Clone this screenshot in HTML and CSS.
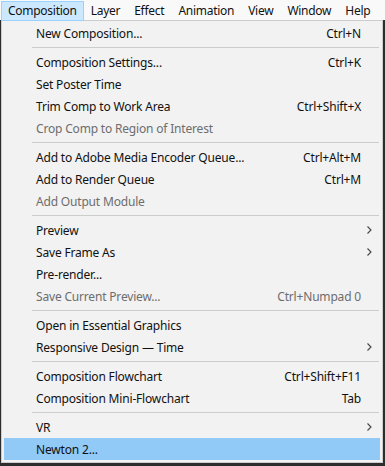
FILE: index.html
```html
<!DOCTYPE html>
<html>
<head>
<meta charset="utf-8">
<link rel="stylesheet" href="styles.css">
</head>
<body>
<div class="menubar">
  <div class="mb-item active">Composition</div>
  <div class="mb-item">Layer</div>
  <div class="mb-item">Effect</div>
  <div class="mb-item">Animation</div>
  <div class="mb-item">View</div>
  <div class="mb-item">Window</div>
  <div class="mb-item">Help</div>
</div>
<div class="dropdown">
  <div class="item"><span class="label">New Composition...</span><span class="key">Ctrl+N</span><span class="sub"></span></div>
  <div class="sep"></div>
  <div class="item"><span class="label">Composition Settings...</span><span class="key">Ctrl+K</span><span class="sub"></span></div>
  <div class="item"><span class="label">Set Poster Time</span><span class="key"></span><span class="sub"></span></div>
  <div class="item"><span class="label">Trim Comp to Work Area</span><span class="key">Ctrl+Shift+X</span><span class="sub"></span></div>
  <div class="item disabled"><span class="label">Crop Comp to Region of Interest</span><span class="key"></span><span class="sub"></span></div>
  <div class="sep"></div>
  <div class="item"><span class="label">Add to Adobe Media Encoder Queue...</span><span class="key">Ctrl+Alt+M</span><span class="sub"></span></div>
  <div class="item"><span class="label">Add to Render Queue</span><span class="key">Ctrl+M</span><span class="sub"></span></div>
  <div class="item disabled"><span class="label">Add Output Module</span><span class="key"></span><span class="sub"></span></div>
  <div class="sep"></div>
  <div class="item"><span class="label">Preview</span><span class="key"></span><span class="sub"><svg class="arrow" width="5" height="8" viewBox="0 0 5 8"><polyline points="0.5,0.5 4,4 0.5,7.5"/></svg></span></div>
  <div class="item"><span class="label">Save Frame As</span><span class="key"></span><span class="sub"><svg class="arrow" width="5" height="8" viewBox="0 0 5 8"><polyline points="0.5,0.5 4,4 0.5,7.5"/></svg></span></div>
  <div class="item"><span class="label">Pre-render...</span><span class="key"></span><span class="sub"></span></div>
  <div class="item disabled"><span class="label">Save Current Preview...</span><span class="key">Ctrl+Numpad 0</span><span class="sub"></span></div>
  <div class="sep"></div>
  <div class="item"><span class="label">Open in Essential Graphics</span><span class="key"></span><span class="sub"></span></div>
  <div class="item"><span class="label">Responsive Design — Time</span><span class="key"></span><span class="sub"><svg class="arrow" width="5" height="8" viewBox="0 0 5 8"><polyline points="0.5,0.5 4,4 0.5,7.5"/></svg></span></div>
  <div class="sep"></div>
  <div class="item"><span class="label">Composition Flowchart</span><span class="key">Ctrl+Shift+F11</span><span class="sub"></span></div>
  <div class="item"><span class="label">Composition Mini-Flowchart</span><span class="key">Tab</span><span class="sub"></span></div>
  <div class="sep"></div>
  <div class="item"><span class="label">VR</span><span class="key"></span><span class="sub"><svg class="arrow" width="5" height="8" viewBox="0 0 5 8"><polyline points="0.5,0.5 4,4 0.5,7.5"/></svg></span></div>
  <div class="item hover"><span class="label">Newton 2...</span><span class="key"></span><span class="sub"></span></div>
</div>
</body>
</html>
```
FILE: styles.css
```css
html, body {
  margin: 0;
  padding: 0;
}
body {
  background: #2d2d2d;
  width: 385px;
  height: 466px;
  overflow: hidden;
  font-family: "Noto Sans", "Liberation Sans", sans-serif;
  font-size: 12px;
  color: #111;
}
.menubar {
  height: 20px;
  background: #f9f9f9;
  display: flex;
  align-items: flex-start;
  padding-left: 1px;
  letter-spacing: -0.27px;
}
.mb-item {
  height: 18px;
  line-height: 18px;
  padding: 0 6px;
  margin-top: 1px;
  border: 1px solid transparent;
}
.mb-item.active {
  background: #cce8ff;
  border-color: #99d1ff;
}
.dropdown {
  margin-left: 1px;
  width: 376px;
  border: 1px solid #cccccc;
  padding: 1px 2px 2px 2px;
  background: #f2f2f2;
  letter-spacing: -0.18px;
}
.item {
  height: 22px;
  display: flex;
  align-items: center;
}
.item .label {
  padding-left: 32px;
  flex: 1;
  white-space: nowrap;
}
.item .key {
  white-space: nowrap;
}
.item .sub {
  width: 19px;
  display: flex;
  align-items: center;
}
.arrow {
  margin-left: 6px;
  fill: none;
  stroke: #444;
  stroke-width: 1.1;
}
.item.disabled {
  color: #6d6d6d;
}
.item.hover {
  background: #91c9f7;
}
.sep {
  height: 7px;
  display: flex;
  align-items: center;
  padding-left: 28px;
  padding-right: 1px;
}
.sep::before {
  content: "";
  flex: 1;
  height: 1px;
  background: #cccccc;
}
```
